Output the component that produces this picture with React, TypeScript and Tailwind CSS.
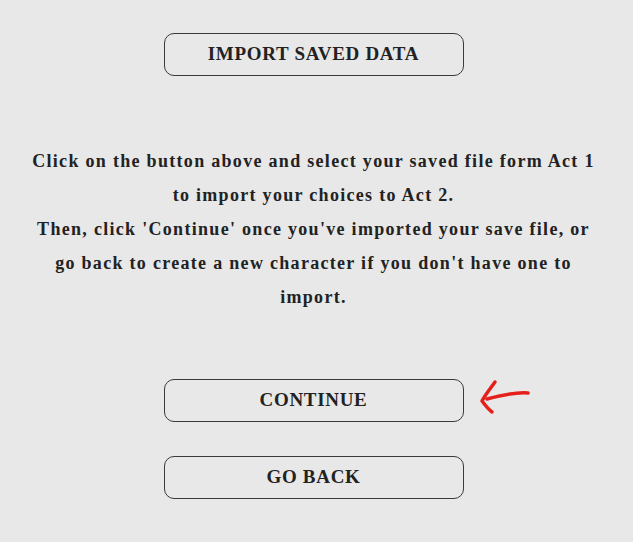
import React from "react";

const serif = "font-['Liberation_Serif','Times_New_Roman',serif]";

const lines = [
  "Click on the button above and select your saved file form Act 1",
  "to import your choices to Act 2.",
  "Then, click 'Continue' once you've imported your save file, or",
  "go back to create a new character if you don't have one to",
  "import.",
];

const ActionButton = ({ label }: { label: string }) => (
  <button className="w-[300px] h-[43px] rounded-[10px] border border-[#3a3a3a] bg-transparent text-[19px] font-bold tracking-[0.7px] text-[#222]">
    {label}
  </button>
);

const App = () => {
  return (
    <div className={`w-full min-h-screen h-[542px] bg-[#e8e8e8] ${serif} flex flex-col items-center pt-[33px] pr-[6px]`}>
      <ActionButton label="IMPORT SAVED DATA" />

      {/* instructions */}
      <div className="mt-[68px] text-center text-[18px] font-bold tracking-[1.3px] leading-[34px] text-[#222]">
        {lines.map((line) => (
          <div key={line} className="whitespace-nowrap">{line}</div>
        ))}
      </div>

      <div className="relative mt-[65px]">
        <ActionButton label="CONTINUE" />
        <svg
          className="absolute left-[314px] top-[0px]"
          width="55"
          height="40"
          viewBox="0 0 55 40"
        >
          <path
            d="M50 14 C40 13 28 15 9 20"
            fill="none"
            stroke="#e5201b"
            strokeWidth="3.5"
            strokeLinecap="round"
          />
          <path
            d="M17 3 C12 10 7 16 4 22 C7 26 10 30 14 33"
            fill="none"
            stroke="#e5201b"
            strokeWidth="3.5"
            strokeLinecap="round"
            strokeLinejoin="round"
          />
        </svg>
      </div>

      <div className="mt-[34px]">
        <ActionButton label="GO BACK" />
      </div>
    </div>
  );
};

export default App;
